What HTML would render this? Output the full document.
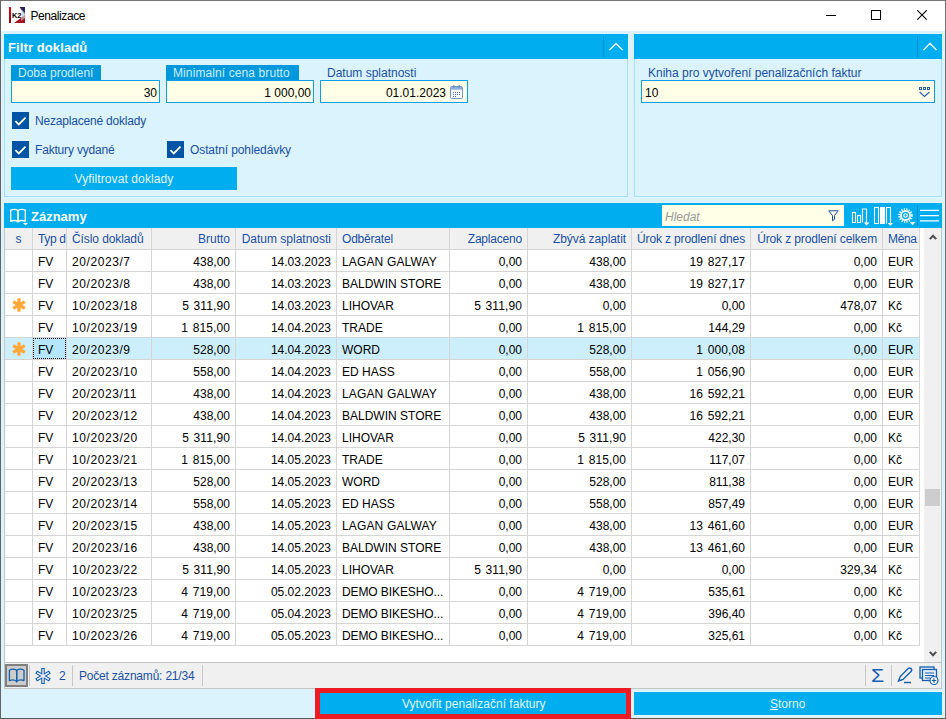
<!DOCTYPE html>
<html lang="cs"><head><meta charset="utf-8"><title>Penalizace</title>
<style>
html,body{margin:0;padding:0;}
body{width:946px;height:719px;overflow:hidden;background:#fff;font-family:"Liberation Sans",sans-serif;font-size:12px;color:#000;}
#win{position:absolute;left:0;top:0;width:946px;height:719px;background:#dbf3fd;overflow:hidden;}
#win div,#win span,#win svg{position:absolute;box-sizing:border-box;}
.t{white-space:nowrap;line-height:16px;height:16px;}
#title{left:1px;top:1px;width:944px;height:30px;background:#fff;}
.hdr{background:#00adee;height:25px;}
.hdr .ttl{color:#fff;font-weight:bold;font-size:13px;}
.pbody{background:#dbf3fd;box-shadow:inset 1px 0 #a8def8,inset -1px 0 #a8def8,inset 0 -1px #a8def8;}
.lab{color:#1a50a3;}
.labbg{background:#0098dd;color:#cdeeff;height:15px;}
.inp{background:#fffee6;border:1px solid #0a9fe8;height:23px;}
.cb{width:17px;height:17px;background:#0054a5;}
.btn{background:#00adee;color:#e4f6ff;text-align:center;}
.row{left:0;width:920px;height:22px;}
.c{top:0;height:22px;line-height:22px;padding:1px 5px 0 5px;white-space:nowrap;overflow:hidden;border-bottom:1px solid #d5d5d5;}
.c.al{text-align:left;} .c.ar{text-align:right;} .c.ac{text-align:center;}
.vl{width:1px;background:#d5d5d5;}
.hrow .c{color:#1a50a3;background:#f0f0f0;border-bottom:1px solid #d5d5d5;padding-top:0;}
.sel .c{background:#cdeefb;}
.sel .c.focus{background:#b5e6fb;}
.sel .c.focus::after{content:"";position:absolute;left:0;top:0;right:0;bottom:0;border:1px dotted #000;}
.star{left:6.8px;top:3.6px;}
</style></head><body>
<div id="win">
<div id="title">
<svg style="left:8px;top:6px" width="16" height="16" viewBox="0 0 16 16">
<rect x="0" y="0" width="16" height="16" fill="#fff"/>
<defs><linearGradient id="rg" x1="0" y1="0" x2="0" y2="1"><stop offset="0" stop-color="#f00010"/><stop offset="1" stop-color="#8a0010"/></linearGradient></defs>
<rect x="0" y="0" width="2" height="16" fill="url(#rg)"/>
<polygon points="10.5,0 16,0 16,8" fill="#2a2450"/>
<polygon points="16,8 16,16 5,16" fill="#a8121c"/>
<polygon points="13,3 16,6 16,11 12,14" fill="#c8c8d8" opacity="0.7"/>
<text x="3" y="10.5" font-family="Liberation Sans, sans-serif" font-weight="bold" font-size="6.5" fill="#000" textLength="9.5" lengthAdjust="spacingAndGlyphs">K2</text>
</svg>
<span class="t" style="left:29.5px;top:7px;font-size:12px;letter-spacing:-0.42px">Penalizace</span>
<svg style="left:825px;top:9px" width="11" height="11" viewBox="0 0 11 11"><line x1="0" y1="5.5" x2="10" y2="5.5" stroke="#000" stroke-width="1"/></svg>
<svg style="left:870px;top:9px" width="11" height="11" viewBox="0 0 11 11"><rect x="0.5" y="0.5" width="9" height="9" fill="none" stroke="#000" stroke-width="1"/></svg>
<svg style="left:916px;top:9px" width="11" height="11" viewBox="0 0 11 11"><path d="M0.3 0.3 L9.7 9.7 M9.7 0.3 L0.3 9.7" stroke="#000" stroke-width="1.1" fill="none"/></svg>
</div>
<div class="hdr" style="left:4px;top:34px;width:624px">
<span class="t ttl" style="left:4px;top:6px;letter-spacing:0.1px">Filtr dokladů</span>
<div style="left:599px;top:2px;width:1px;height:21px;background:#0091d3"></div>
<svg style="left:604px;top:8px" width="16" height="10" viewBox="0 0 16 10"><path d="M1.4 8.1 L8 1.5 L14.6 8.1" fill="none" stroke="#fff" stroke-width="1.3"/></svg>
</div>
<div class="pbody" style="left:4px;top:59px;width:624px;height:138px">
 <div class="labbg" style="left:7px;top:6px;width:90px"><span class="t" style="left:7px;top:1px;line-height:15px">Doba prodlení</span></div>
 <div class="inp" style="left:7px;top:21px;width:149px"><span class="t" style="right:2px;top:4px">30</span></div>
 <div class="labbg" style="left:162px;top:6px;width:133px"><span class="t" style="left:7px;top:1px;line-height:15px;letter-spacing:0.1px">Minimalní cena brutto</span></div>
 <div class="inp" style="left:162px;top:21px;width:148px"><span class="t" style="right:2px;top:4px">1 000,00</span></div>
 <span class="t lab" style="left:323px;top:7px;line-height:15px">Datum splatnosti</span>
 <div class="inp" style="left:316px;top:21px;width:148px"><span class="t" style="right:21px;top:4px">01.01.2023</span>
  <svg style="left:129px;top:3.5px" width="13" height="14" viewBox="0 0 13 14"><rect x="0.5" y="1.5" width="12" height="12" rx="1.2" fill="#f4f8fd" stroke="#7398c8"/><rect x="1" y="2" width="11" height="2.6" fill="#8fb0dc"/><rect x="3" y="0.3" width="1.4" height="2.6" fill="#6a8cc0"/><rect x="8.6" y="0.3" width="1.4" height="2.6" fill="#6a8cc0"/><g fill="#4a78b8"><rect x="3" y="7" width="1" height="1"/><rect x="5" y="7" width="1" height="1"/><rect x="7" y="7" width="1" height="1"/><rect x="9" y="7" width="1" height="1"/><rect x="3" y="9" width="1" height="1"/><rect x="5" y="9" width="1" height="1"/><rect x="7" y="9" width="1" height="1"/><rect x="9" y="9" width="1" height="1"/><rect x="3" y="11" width="1" height="1"/><rect x="5" y="11" width="1" height="1"/></g></svg>
 </div>
 <div class="cb" style="left:8px;top:53px"><svg width="17" height="17" viewBox="0 0 17 17" style="left:0;top:0"><path d="M3.4 9.2 L6.8 12.4 L13.5 5.7" fill="none" stroke="#ffffe0" stroke-width="1.8"/></svg></div><span class="t lab" style="left:31px;top:54px;letter-spacing:-0.2px">Nezaplacené doklady</span>
 <div class="cb" style="left:8px;top:82px"><svg width="17" height="17" viewBox="0 0 17 17" style="left:0;top:0"><path d="M3.4 9.2 L6.8 12.4 L13.5 5.7" fill="none" stroke="#ffffe0" stroke-width="1.8"/></svg></div><span class="t lab" style="left:31px;top:83px;letter-spacing:-0.18px">Faktury vydané</span>
 <div class="cb" style="left:163px;top:82px"><svg width="17" height="17" viewBox="0 0 17 17" style="left:0;top:0"><path d="M3.4 9.2 L6.8 12.4 L13.5 5.7" fill="none" stroke="#ffffe0" stroke-width="1.8"/></svg></div><span class="t lab" style="left:186px;top:83px;letter-spacing:-0.1px">Ostatní pohledávky</span>
 <div class="btn" style="left:7px;top:108px;width:226px;height:23px;line-height:24px;letter-spacing:0.1px">Vyfiltrovat doklady</div>
</div>
<div class="hdr" style="left:634px;top:34px;width:308px">
<div style="left:283px;top:2px;width:1px;height:21px;background:#0091d3"></div>
<svg style="left:288px;top:8px" width="16" height="10" viewBox="0 0 16 10"><path d="M1.4 8.1 L8 1.5 L14.6 8.1" fill="none" stroke="#fff" stroke-width="1.3"/></svg>
</div>
<div class="pbody" style="left:634px;top:59px;width:308px;height:138px">
 <span class="t lab" style="left:14px;top:7px;line-height:15px">Kniha pro vytvoření penalizačních faktur</span>
 <div class="inp" style="left:7px;top:21px;width:294px"><span class="t" style="left:3px;top:4px">10</span>
  <svg style="left:277px;top:6px" width="13" height="11" viewBox="0 0 13 11"><g fill="none" stroke="#2a60b0" stroke-width="1"><rect x="0.5" y="0.5" width="2" height="2"/><rect x="4.5" y="0.5" width="2" height="2"/><rect x="8.5" y="0.5" width="2" height="2"/><path d="M0.6 5 L5.5 9.4 L10.4 5" stroke-width="1.2"/></g></svg>
 </div>
</div>
<div class="hdr" style="left:4px;top:203px;width:938px">
<svg style="left:5px;top:4px" width="20" height="20" viewBox="0 0 20 20"><g fill="none" stroke="#fff" stroke-width="1.3"><path d="M9 3.5 C7 2.2 4 2.2 1.7 3.2 L1.7 14.2 C4 13.3 7 13.3 9 14.6 Z"/><path d="M9 3.5 C11 2.2 14 2.2 16.3 3.2 L16.3 14.2 C14 13.3 11 13.3 9 14.6 Z"/></g><polygon points="14,16 19,16 16.5,18.5" fill="#fff"/></svg>
<span class="t ttl" style="left:27px;top:6px">Záznamy</span>
<div style="left:658px;top:2px;width:182px;height:21px;background:#fffee6"><span class="t" style="left:3px;top:4px;color:#9a9a9a;font-style:italic">Hledat</span>
 <svg style="left:166px;top:5px" width="12" height="12" viewBox="0 0 12 12"><path d="M0.8 0.8 L10.2 0.8 L6.5 5.6 L6.5 9.4 L4.5 10.8 L4.5 5.6 Z" fill="none" stroke="#1a50a3" stroke-width="1" stroke-linejoin="round"/></svg>
</div>
<svg style="left:847px;top:4px" width="18" height="20" viewBox="0 0 18 20"><g fill="none" stroke="#fff" stroke-width="1.1"><rect x="1.5" y="5.5" width="3" height="10"/><rect x="6.5" y="8.5" width="3" height="7"/><path d="M11.5 15.5 L11.5 2 L15.5 2 L15.5 16"/></g><polygon points="12.7,15.6 18.3,15.6 15.5,18.6" fill="#fff"/></svg>
<svg style="left:869px;top:3px" width="20" height="20" viewBox="0 0 20 20"><g fill="none" stroke="#fff" stroke-width="1.1"><rect x="1.5" y="1.5" width="4" height="16"/><path d="M13.5 17.5 L13.5 1.5 L17.5 1.5 L17.5 17"/></g><rect x="7" y="1" width="5" height="17" fill="#fff"/><polygon points="14.7,17 20,17 17.35,19.7" fill="#fff"/></svg>
<svg style="left:893px;top:4px" width="20" height="20" viewBox="0 0 20 20"><g fill="none" stroke="#fff"><circle cx="8.5" cy="8.5" r="6.3" stroke-width="2" stroke-dasharray="1.2 1.274"/><circle cx="8.5" cy="8.5" r="4.55" stroke-width="1.8"/><circle cx="8.5" cy="8.5" r="1.75" stroke-width="1.2"/></g><polygon points="12.8,15.1 18.3,15.1 15.55,18.3" fill="#fff"/></svg>
<div style="left:913px;top:2px;width:1px;height:21px;background:#0091d3"></div>
<svg style="left:916px;top:5px" width="20" height="16" viewBox="0 0 20 16"><path d="M0 2.35 H19 M0 7.55 H19 M0 12.9 H19" stroke="#fff" stroke-width="1.15"/></svg>
</div>
<div style="left:4px;top:228px;width:938px;height:434px;background:#fff;box-shadow:inset 1px 0 #c6c6c6,inset -1px 0 #c6c6c6"></div>
<div class="row hrow" style="top:228px"><div class="c ac" style="left:5px;width:27px">s</div><div class="c al" style="left:33px;width:33px;letter-spacing:-0.35px">Typ d</div><div class="c al" style="left:67px;width:84px;letter-spacing:-0.09px">Číslo dokladů</div><div class="c ar" style="left:152px;width:83px">Brutto</div><div class="c ar" style="left:236px;width:100px">Datum splatnosti</div><div class="c al" style="left:337px;width:112px;letter-spacing:-0.2px">Odběratel</div><div class="c ar" style="left:450px;width:77px;letter-spacing:-0.2px">Zaplaceno</div><div class="c ar" style="left:528px;width:103px;letter-spacing:-0.07px">Zbývá zaplatit</div><div class="c ar" style="left:632px;width:118px;letter-spacing:-0.14px">Úrok z prodlení dnes</div><div class="c ar" style="left:751px;width:131px;letter-spacing:-0.13px">Úrok z prodlení celkem</div><div class="c al" style="left:883px;width:36px;letter-spacing:-0.35px">Měna</div></div>
<div class="row" style="top:250px"><div class="c ac" style="left:5px;width:27px"></div><div class="c al" style="left:33px;width:33px">FV</div><div class="c al" style="left:67px;width:84px;letter-spacing:0.58px">20/2023/7</div><div class="c ar" style="left:152px;width:83px">438,00</div><div class="c ar" style="left:236px;width:100px">14.03.2023</div><div class="c al" style="left:337px;width:112px;letter-spacing:0.15px">LAGAN GALWAY</div><div class="c ar" style="left:450px;width:77px">0,00</div><div class="c ar" style="left:528px;width:103px">438,00</div><div class="c ar" style="left:632px;width:118px;word-spacing:1.2px;letter-spacing:0.1px">19 827,17</div><div class="c ar" style="left:751px;width:131px">0,00</div><div class="c al" style="left:883px;width:36px">EUR</div></div>
<div class="row" style="top:272px"><div class="c ac" style="left:5px;width:27px"></div><div class="c al" style="left:33px;width:33px">FV</div><div class="c al" style="left:67px;width:84px;letter-spacing:0.58px">20/2023/8</div><div class="c ar" style="left:152px;width:83px">438,00</div><div class="c ar" style="left:236px;width:100px">14.03.2023</div><div class="c al" style="left:337px;width:112px">BALDWIN STORE</div><div class="c ar" style="left:450px;width:77px">0,00</div><div class="c ar" style="left:528px;width:103px">438,00</div><div class="c ar" style="left:632px;width:118px;word-spacing:1.2px;letter-spacing:0.1px">19 827,17</div><div class="c ar" style="left:751px;width:131px">0,00</div><div class="c al" style="left:883px;width:36px">EUR</div></div>
<div class="row" style="top:294px"><div class="c ac" style="left:5px;width:27px"><svg class="star" width="14" height="14" viewBox="0 0 14 14"><g stroke="#ffa838" stroke-width="3.3" stroke-linecap="butt"><line x1="7" y1="0.3" x2="7" y2="13.7"/><line x1="1.2" y1="3.65" x2="12.8" y2="10.35"/><line x1="1.2" y1="10.35" x2="12.8" y2="3.65"/></g></svg></div><div class="c al" style="left:33px;width:33px">FV</div><div class="c al" style="left:67px;width:84px;letter-spacing:0.58px">10/2023/18</div><div class="c ar" style="left:152px;width:83px;word-spacing:1.2px;letter-spacing:0.1px">5 311,90</div><div class="c ar" style="left:236px;width:100px">14.03.2023</div><div class="c al" style="left:337px;width:112px">LIHOVAR</div><div class="c ar" style="left:450px;width:77px;word-spacing:1.2px;letter-spacing:0.1px">5 311,90</div><div class="c ar" style="left:528px;width:103px">0,00</div><div class="c ar" style="left:632px;width:118px">0,00</div><div class="c ar" style="left:751px;width:131px">478,07</div><div class="c al" style="left:883px;width:36px">Kč</div></div>
<div class="row" style="top:316px"><div class="c ac" style="left:5px;width:27px"></div><div class="c al" style="left:33px;width:33px">FV</div><div class="c al" style="left:67px;width:84px;letter-spacing:0.58px">10/2023/19</div><div class="c ar" style="left:152px;width:83px;word-spacing:1.2px;letter-spacing:0.1px">1 815,00</div><div class="c ar" style="left:236px;width:100px">14.04.2023</div><div class="c al" style="left:337px;width:112px">TRADE</div><div class="c ar" style="left:450px;width:77px">0,00</div><div class="c ar" style="left:528px;width:103px;word-spacing:1.2px;letter-spacing:0.1px">1 815,00</div><div class="c ar" style="left:632px;width:118px">144,29</div><div class="c ar" style="left:751px;width:131px">0,00</div><div class="c al" style="left:883px;width:36px">Kč</div></div>
<div class="row sel" style="top:338px"><div class="c ac" style="left:5px;width:27px"><svg class="star" width="14" height="14" viewBox="0 0 14 14"><g stroke="#ffa838" stroke-width="3.3" stroke-linecap="butt"><line x1="7" y1="0.3" x2="7" y2="13.7"/><line x1="1.2" y1="3.65" x2="12.8" y2="10.35"/><line x1="1.2" y1="10.35" x2="12.8" y2="3.65"/></g></svg></div><div class="c al focus" style="left:33px;width:33px">FV</div><div class="c al" style="left:67px;width:84px;letter-spacing:0.58px">20/2023/9</div><div class="c ar" style="left:152px;width:83px">528,00</div><div class="c ar" style="left:236px;width:100px">14.04.2023</div><div class="c al" style="left:337px;width:112px">WORD</div><div class="c ar" style="left:450px;width:77px">0,00</div><div class="c ar" style="left:528px;width:103px">528,00</div><div class="c ar" style="left:632px;width:118px;word-spacing:1.2px;letter-spacing:0.1px">1 000,08</div><div class="c ar" style="left:751px;width:131px">0,00</div><div class="c al" style="left:883px;width:36px">EUR</div></div>
<div class="row" style="top:360px"><div class="c ac" style="left:5px;width:27px"></div><div class="c al" style="left:33px;width:33px">FV</div><div class="c al" style="left:67px;width:84px;letter-spacing:0.58px">20/2023/10</div><div class="c ar" style="left:152px;width:83px">558,00</div><div class="c ar" style="left:236px;width:100px">14.04.2023</div><div class="c al" style="left:337px;width:112px">ED HASS</div><div class="c ar" style="left:450px;width:77px">0,00</div><div class="c ar" style="left:528px;width:103px">558,00</div><div class="c ar" style="left:632px;width:118px;word-spacing:1.2px;letter-spacing:0.1px">1 056,90</div><div class="c ar" style="left:751px;width:131px">0,00</div><div class="c al" style="left:883px;width:36px">EUR</div></div>
<div class="row" style="top:382px"><div class="c ac" style="left:5px;width:27px"></div><div class="c al" style="left:33px;width:33px">FV</div><div class="c al" style="left:67px;width:84px;letter-spacing:0.58px">20/2023/11</div><div class="c ar" style="left:152px;width:83px">438,00</div><div class="c ar" style="left:236px;width:100px">14.04.2023</div><div class="c al" style="left:337px;width:112px;letter-spacing:0.15px">LAGAN GALWAY</div><div class="c ar" style="left:450px;width:77px">0,00</div><div class="c ar" style="left:528px;width:103px">438,00</div><div class="c ar" style="left:632px;width:118px;word-spacing:1.2px;letter-spacing:0.1px">16 592,21</div><div class="c ar" style="left:751px;width:131px">0,00</div><div class="c al" style="left:883px;width:36px">EUR</div></div>
<div class="row" style="top:404px"><div class="c ac" style="left:5px;width:27px"></div><div class="c al" style="left:33px;width:33px">FV</div><div class="c al" style="left:67px;width:84px;letter-spacing:0.58px">20/2023/12</div><div class="c ar" style="left:152px;width:83px">438,00</div><div class="c ar" style="left:236px;width:100px">14.04.2023</div><div class="c al" style="left:337px;width:112px">BALDWIN STORE</div><div class="c ar" style="left:450px;width:77px">0,00</div><div class="c ar" style="left:528px;width:103px">438,00</div><div class="c ar" style="left:632px;width:118px;word-spacing:1.2px;letter-spacing:0.1px">16 592,21</div><div class="c ar" style="left:751px;width:131px">0,00</div><div class="c al" style="left:883px;width:36px">EUR</div></div>
<div class="row" style="top:426px"><div class="c ac" style="left:5px;width:27px"></div><div class="c al" style="left:33px;width:33px">FV</div><div class="c al" style="left:67px;width:84px;letter-spacing:0.58px">10/2023/20</div><div class="c ar" style="left:152px;width:83px;word-spacing:1.2px;letter-spacing:0.1px">5 311,90</div><div class="c ar" style="left:236px;width:100px">14.04.2023</div><div class="c al" style="left:337px;width:112px">LIHOVAR</div><div class="c ar" style="left:450px;width:77px">0,00</div><div class="c ar" style="left:528px;width:103px;word-spacing:1.2px;letter-spacing:0.1px">5 311,90</div><div class="c ar" style="left:632px;width:118px">422,30</div><div class="c ar" style="left:751px;width:131px">0,00</div><div class="c al" style="left:883px;width:36px">Kč</div></div>
<div class="row" style="top:448px"><div class="c ac" style="left:5px;width:27px"></div><div class="c al" style="left:33px;width:33px">FV</div><div class="c al" style="left:67px;width:84px;letter-spacing:0.58px">10/2023/21</div><div class="c ar" style="left:152px;width:83px;word-spacing:1.2px;letter-spacing:0.1px">1 815,00</div><div class="c ar" style="left:236px;width:100px">14.05.2023</div><div class="c al" style="left:337px;width:112px">TRADE</div><div class="c ar" style="left:450px;width:77px">0,00</div><div class="c ar" style="left:528px;width:103px;word-spacing:1.2px;letter-spacing:0.1px">1 815,00</div><div class="c ar" style="left:632px;width:118px">117,07</div><div class="c ar" style="left:751px;width:131px">0,00</div><div class="c al" style="left:883px;width:36px">Kč</div></div>
<div class="row" style="top:470px"><div class="c ac" style="left:5px;width:27px"></div><div class="c al" style="left:33px;width:33px">FV</div><div class="c al" style="left:67px;width:84px;letter-spacing:0.58px">20/2023/13</div><div class="c ar" style="left:152px;width:83px">528,00</div><div class="c ar" style="left:236px;width:100px">14.05.2023</div><div class="c al" style="left:337px;width:112px">WORD</div><div class="c ar" style="left:450px;width:77px">0,00</div><div class="c ar" style="left:528px;width:103px">528,00</div><div class="c ar" style="left:632px;width:118px">811,38</div><div class="c ar" style="left:751px;width:131px">0,00</div><div class="c al" style="left:883px;width:36px">EUR</div></div>
<div class="row" style="top:492px"><div class="c ac" style="left:5px;width:27px"></div><div class="c al" style="left:33px;width:33px">FV</div><div class="c al" style="left:67px;width:84px;letter-spacing:0.58px">20/2023/14</div><div class="c ar" style="left:152px;width:83px">558,00</div><div class="c ar" style="left:236px;width:100px">14.05.2023</div><div class="c al" style="left:337px;width:112px">ED HASS</div><div class="c ar" style="left:450px;width:77px">0,00</div><div class="c ar" style="left:528px;width:103px">558,00</div><div class="c ar" style="left:632px;width:118px">857,49</div><div class="c ar" style="left:751px;width:131px">0,00</div><div class="c al" style="left:883px;width:36px">EUR</div></div>
<div class="row" style="top:514px"><div class="c ac" style="left:5px;width:27px"></div><div class="c al" style="left:33px;width:33px">FV</div><div class="c al" style="left:67px;width:84px;letter-spacing:0.58px">20/2023/15</div><div class="c ar" style="left:152px;width:83px">438,00</div><div class="c ar" style="left:236px;width:100px">14.05.2023</div><div class="c al" style="left:337px;width:112px;letter-spacing:0.15px">LAGAN GALWAY</div><div class="c ar" style="left:450px;width:77px">0,00</div><div class="c ar" style="left:528px;width:103px">438,00</div><div class="c ar" style="left:632px;width:118px;word-spacing:1.2px;letter-spacing:0.1px">13 461,60</div><div class="c ar" style="left:751px;width:131px">0,00</div><div class="c al" style="left:883px;width:36px">EUR</div></div>
<div class="row" style="top:536px"><div class="c ac" style="left:5px;width:27px"></div><div class="c al" style="left:33px;width:33px">FV</div><div class="c al" style="left:67px;width:84px;letter-spacing:0.58px">20/2023/16</div><div class="c ar" style="left:152px;width:83px">438,00</div><div class="c ar" style="left:236px;width:100px">14.05.2023</div><div class="c al" style="left:337px;width:112px">BALDWIN STORE</div><div class="c ar" style="left:450px;width:77px">0,00</div><div class="c ar" style="left:528px;width:103px">438,00</div><div class="c ar" style="left:632px;width:118px;word-spacing:1.2px;letter-spacing:0.1px">13 461,60</div><div class="c ar" style="left:751px;width:131px">0,00</div><div class="c al" style="left:883px;width:36px">EUR</div></div>
<div class="row" style="top:558px"><div class="c ac" style="left:5px;width:27px"></div><div class="c al" style="left:33px;width:33px">FV</div><div class="c al" style="left:67px;width:84px;letter-spacing:0.58px">10/2023/22</div><div class="c ar" style="left:152px;width:83px;word-spacing:1.2px;letter-spacing:0.1px">5 311,90</div><div class="c ar" style="left:236px;width:100px">14.05.2023</div><div class="c al" style="left:337px;width:112px">LIHOVAR</div><div class="c ar" style="left:450px;width:77px;word-spacing:1.2px;letter-spacing:0.1px">5 311,90</div><div class="c ar" style="left:528px;width:103px">0,00</div><div class="c ar" style="left:632px;width:118px">0,00</div><div class="c ar" style="left:751px;width:131px">329,34</div><div class="c al" style="left:883px;width:36px">Kč</div></div>
<div class="row" style="top:580px"><div class="c ac" style="left:5px;width:27px"></div><div class="c al" style="left:33px;width:33px">FV</div><div class="c al" style="left:67px;width:84px;letter-spacing:0.58px">10/2023/23</div><div class="c ar" style="left:152px;width:83px;word-spacing:1.2px;letter-spacing:0.1px">4 719,00</div><div class="c ar" style="left:236px;width:100px">05.02.2023</div><div class="c al" style="left:337px;width:112px;letter-spacing:-0.1px">DEMO BIKESHO...</div><div class="c ar" style="left:450px;width:77px">0,00</div><div class="c ar" style="left:528px;width:103px;word-spacing:1.2px;letter-spacing:0.1px">4 719,00</div><div class="c ar" style="left:632px;width:118px">535,61</div><div class="c ar" style="left:751px;width:131px">0,00</div><div class="c al" style="left:883px;width:36px">Kč</div></div>
<div class="row" style="top:602px"><div class="c ac" style="left:5px;width:27px"></div><div class="c al" style="left:33px;width:33px">FV</div><div class="c al" style="left:67px;width:84px;letter-spacing:0.58px">10/2023/25</div><div class="c ar" style="left:152px;width:83px;word-spacing:1.2px;letter-spacing:0.1px">4 719,00</div><div class="c ar" style="left:236px;width:100px">05.04.2023</div><div class="c al" style="left:337px;width:112px;letter-spacing:-0.1px">DEMO BIKESHO...</div><div class="c ar" style="left:450px;width:77px">0,00</div><div class="c ar" style="left:528px;width:103px;word-spacing:1.2px;letter-spacing:0.1px">4 719,00</div><div class="c ar" style="left:632px;width:118px">396,40</div><div class="c ar" style="left:751px;width:131px">0,00</div><div class="c al" style="left:883px;width:36px">Kč</div></div>
<div class="row" style="top:624px"><div class="c ac" style="left:5px;width:27px"></div><div class="c al" style="left:33px;width:33px">FV</div><div class="c al" style="left:67px;width:84px;letter-spacing:0.58px">10/2023/26</div><div class="c ar" style="left:152px;width:83px;word-spacing:1.2px;letter-spacing:0.1px">4 719,00</div><div class="c ar" style="left:236px;width:100px">05.05.2023</div><div class="c al" style="left:337px;width:112px;letter-spacing:-0.1px">DEMO BIKESHO...</div><div class="c ar" style="left:450px;width:77px">0,00</div><div class="c ar" style="left:528px;width:103px;word-spacing:1.2px;letter-spacing:0.1px">4 719,00</div><div class="c ar" style="left:632px;width:118px">325,61</div><div class="c ar" style="left:751px;width:131px">0,00</div><div class="c al" style="left:883px;width:36px">Kč</div></div>
<div class="vl" style="left:32px;top:228px;height:418px"></div><div class="vl" style="left:66px;top:228px;height:418px"></div><div class="vl" style="left:151px;top:228px;height:418px"></div><div class="vl" style="left:235px;top:228px;height:418px"></div><div class="vl" style="left:336px;top:228px;height:418px"></div><div class="vl" style="left:449px;top:228px;height:418px"></div><div class="vl" style="left:527px;top:228px;height:418px"></div><div class="vl" style="left:631px;top:228px;height:418px"></div><div class="vl" style="left:750px;top:228px;height:418px"></div><div class="vl" style="left:882px;top:228px;height:418px"></div><div class="vl" style="left:919px;top:228px;height:418px"></div>
<div style="left:924px;top:228px;width:17px;height:434px;background:#f0f0f0"></div>
<svg style="left:927.5px;top:233px" width="10" height="8" viewBox="0 0 10 8"><path d="M1.8 6.1 L5 2.7 L8.2 6.1" fill="none" stroke="#505050" stroke-width="2.1"/></svg>
<svg style="left:927.5px;top:650px" width="10" height="8" viewBox="0 0 10 8"><path d="M1.8 1.9 L5 5.3 L8.2 1.9" fill="none" stroke="#505050" stroke-width="2.1"/></svg>
<div style="left:925px;top:489px;width:15px;height:17px;background:#cdcdcd"></div>
<div style="left:4px;top:662px;width:938px;height:27px;background:#f0f0f0;box-shadow:inset 0 1px #c4c4c4,inset 0 -1px #c4c4c4,inset 1px 0 #c6c6c6,inset -1px 0 #c6c6c6">
<div style="left:1px;top:1px;width:936px;height:25px">
 <div style="left:0px;top:1px;width:23px;height:23px;background:#cccccc;border:2px solid #7f7f7f"></div>
 <svg style="left:3px;top:4px" width="18" height="18" viewBox="0 0 18 18"><g fill="none" stroke="#1560b0" stroke-width="1.3" stroke-linejoin="round"><path d="M8.7 3.4 C6.6 2 3.6 2 1.4 3.2 L1.4 13.6 C3.6 12.6 6.6 12.6 8.7 14.4 Z"/><path d="M8.7 3.4 C10.8 2 13.8 2 16 3.2 L16 13.6 C13.8 12.6 10.8 12.6 8.7 14.4 Z"/><path d="M8.7 14.4 L8.7 15.6"/></g></svg>
 <div style="left:24px;top:2px;width:1px;height:21px;background:#c8c8c8"></div>
 <svg style="left:29px;top:4px" width="18" height="18" viewBox="0 0 18 18"><g stroke="#1560b0" stroke-width="3.6" stroke-linecap="butt"><line x1="9" y1="1" x2="9" y2="17"/><line x1="2.1" y1="5" x2="15.9" y2="13"/><line x1="2.1" y1="13" x2="15.9" y2="5"/></g><g stroke="#f0f0f0" stroke-width="1.4" stroke-linecap="butt"><line x1="9" y1="2.1" x2="9" y2="15.9"/><line x1="3.05" y1="5.55" x2="14.95" y2="12.45"/><line x1="3.05" y1="12.45" x2="14.95" y2="5.55"/></g></svg>
 <span class="t lab" style="left:54px;top:5px">2</span>
 <div style="left:67px;top:2px;width:1px;height:21px;background:#c8c8c8"></div>
 <span class="t lab" style="left:74px;top:5px;letter-spacing:-0.2px">Počet záznamů: 21/34</span>
 <div style="left:197px;top:2px;width:1px;height:21px;background:#c8c8c8"></div>
 <div style="left:860px;top:2px;width:1px;height:21px;background:#c8c8c8"></div>
 <span class="t" style="left:866px;top:2px;font-size:18.5px;line-height:22px;height:22px;color:#1560b0;transform:scaleX(1.15);transform-origin:0 0">Σ</span>
 <div style="left:886px;top:2px;width:1px;height:21px;background:#c8c8c8"></div>
 <svg style="left:891px;top:4px" width="18" height="18" viewBox="0 0 18 18"><g fill="none" stroke="#1560b0" stroke-width="1.45"><path d="M2.5 14 L4.2 9.6 L12.2 1.6 C13 0.8 14.2 0.8 15 1.6 C15.8 2.4 15.8 3.6 15 4.4 L7 12.4 Z"/><path d="M8 15.5 H15"/></g></svg>
 <svg style="left:914px;top:3px" width="22" height="20" viewBox="0 0 22 20"><g fill="#e8eef8" stroke="#1560b0" stroke-width="1.3"><rect x="1" y="1" width="14" height="11"/><rect x="3.5" y="3.5" width="14" height="11"/></g><path d="M6 7 H15 M6 9.5 H15 M6 12 H11" stroke="#1560b0" stroke-width="1"/><circle cx="15" cy="14.5" r="4" fill="#fff" stroke="#1560b0" stroke-width="1.2"/><path d="M12.8 14.5 H17.2 M15 12.3 V16.7" stroke="#1560b0" stroke-width="1.2"/></svg>
</div>
</div>
<div style="left:0;top:0;width:946px;height:1px;background:#747474"></div>
<div style="left:0;top:0;width:1px;height:719px;background:#636363"></div>
<div style="left:945px;top:0;width:1px;height:719px;background:#6e6e6e"></div>
<div style="left:0;top:718px;width:946px;height:1px;background:#5a5656"></div>
<div style="left:315px;top:688px;width:316px;height:31px;background:#ed1c24"></div>
<div class="btn" style="left:320px;top:693px;width:306px;height:21px;line-height:21px"><span class="t" style="left:82px;top:3px;letter-spacing:0.02px">Vytvořit penalizační faktury</span></div>
<div style="left:633px;top:691px;width:310px;height:25px;background:#e8f8ff"></div>
<div class="btn" style="left:634px;top:692px;width:308px;height:23px;line-height:23px"><span class="t" style="left:136px;top:4px"><span style="position:static;text-decoration:underline">S</span>torno</span></div>
</div></body></html>
